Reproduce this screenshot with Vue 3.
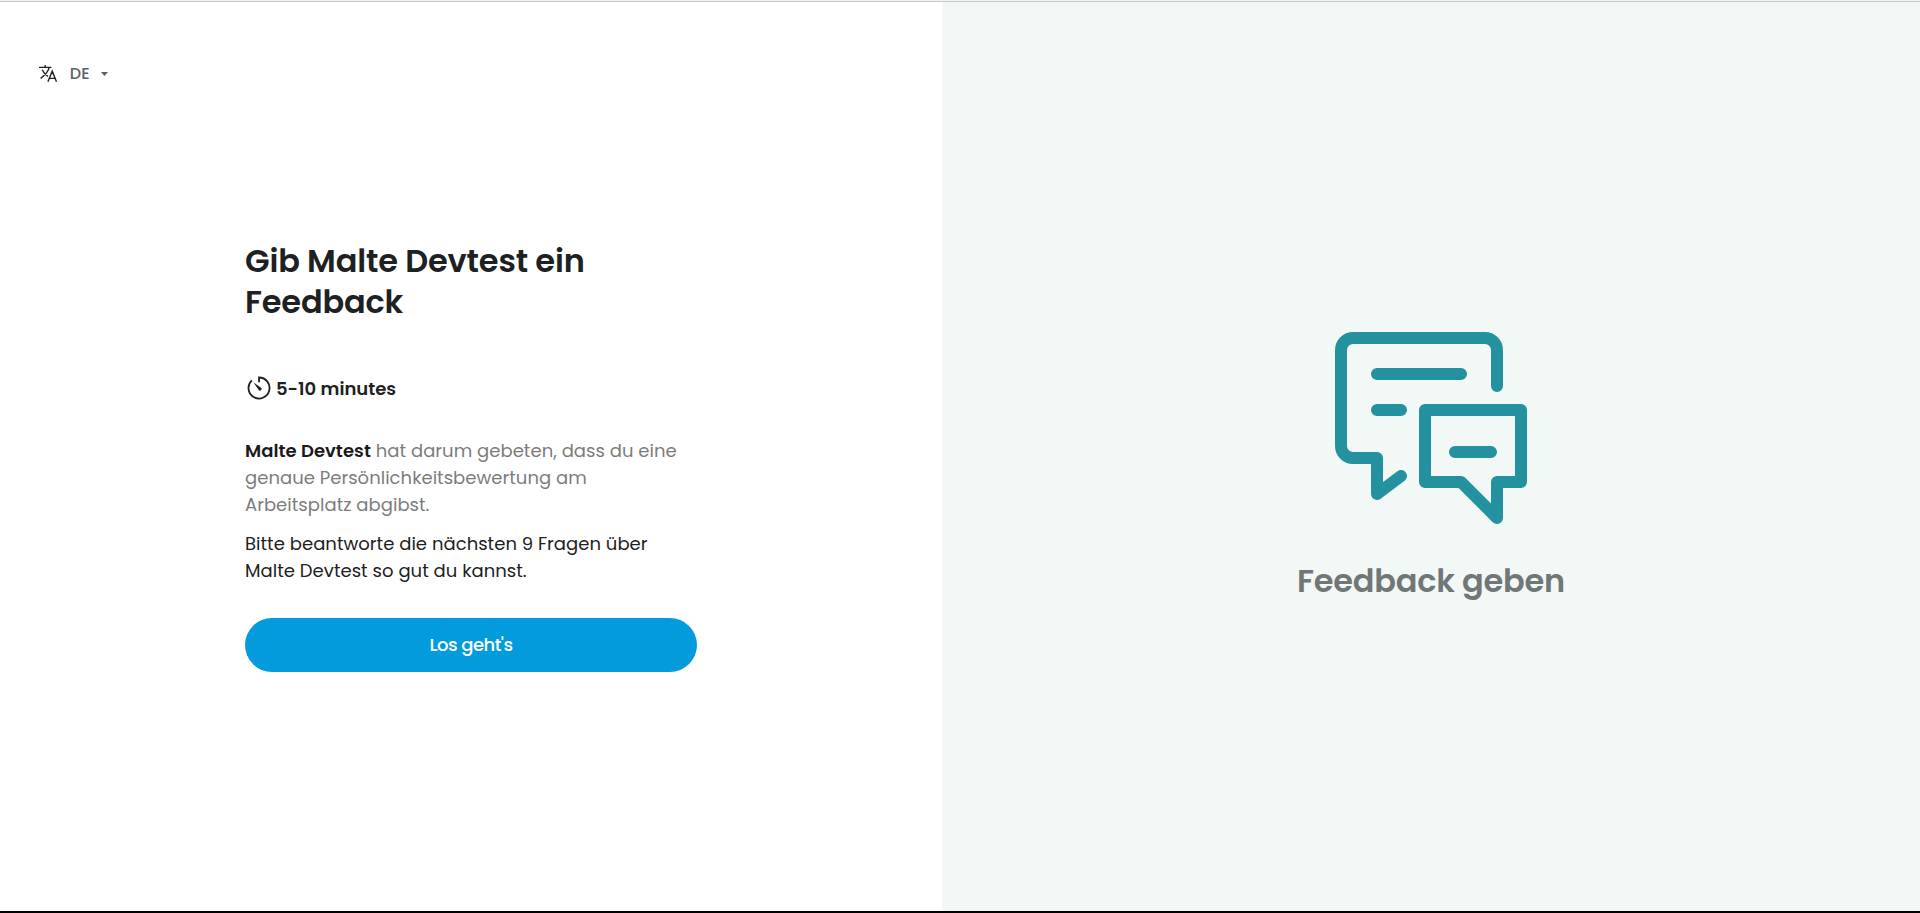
<script setup>
const intro = [
  'genaue Persönlichkeitsbewertung am',
  'Arbeitsplatz abgibst.',
]
const ask = [
  'Bitte beantworte die nächsten 9 Fragen über',
  'Malte Devtest so gut du kannst.',
]
</script>

<template>
  <div class="page">
    <main class="left">
      <div class="lang">
        <svg class="translate" viewBox="0 0 18 17"><path d="M0 2.4H12.4M6.2 0V2.4M10.2 2.4C9.4 6.2 6.4 10 1.6 13.3M3.1 4.8C4.3 7.4 6.4 9.6 9 11.3M8.9 16.7L13.2 6.2L17.5 16.7M10.3 13.4H16.1" /></svg>
        <span class="code">DE</span>
        <svg class="caret" viewBox="0 0 7 4"><path d="M0 0H7L3.5 4Z" /></svg>
      </div>
      <section class="content">
        <h1>Gib Malte Devtest ein<br>Feedback</h1>
        <div class="time">
          <svg class="timer" viewBox="0 0 24 24"><path class="ring" d="M12 6.2V1.5A10.5 10.5 0 1 1 4.9 4.3" /><path class="hand" d="M6.2 6.2L13.7 11.6A1.55 1.55 0 1 1 11.6 13.7Z" /></svg>
          <span class="minutes">5-10 minutes</span>
        </div>
        <p class="intro">
          <span class="line"><strong>Malte Devtest</strong> hat darum gebeten, dass du eine</span>
          <span v-for="l in intro" :key="l" class="line">{{ l }}</span>
        </p>
        <p class="ask">
          <span v-for="l in ask" :key="l" class="line">{{ l }}</span>
        </p>
        <button type="button">Los geht's</button>
      </section>
    </main>
    <aside class="right">
      <svg class="chat" viewBox="0 0 192 192"><path d="M162 54V18A12 12 0 0 0 150 6H18A12 12 0 0 0 6 18V114A12 12 0 0 0 18 126H42V162L66 144M42 42H126M42 78H66M90 78H186V150H162V186L126 150H90ZM120 120H156" /></svg>
      <h2>Feedback geben</h2>
    </aside>
  </div>
</template>

<style>
body { margin: 0; background: #fff; }
</style>

<style scoped>
.page {
  box-sizing: border-box;
  display: flex;
  width: 1920px;
  height: 913px;
  border-bottom: 2px solid #000;
  background: linear-gradient(#f3f3f3 1px, #c6c8c8 1px, #c6c8c8 2px, #fff 2px);
  padding-top: 2px;
  overflow: hidden;
  font-family: Poppins, Inter, sans-serif;
  color: #1d2122;
}
.left { width: 942px; }
.lang { display: flex; align-items: center; height: 24px; padding: 60px 0 0 39px; }
.translate { width: 18px; height: 17px; margin: -2px 0 0 0.4px; fill: none; stroke: #1d2122; stroke-width: 1.4; overflow: visible; }
.code { width: 20px; margin-left: 12.4px; font-size: 16px; line-height: 24px; font-weight: 500; color: #5d6062; }
.caret { width: 7px; height: 4px; margin-left: 11.4px; fill: #5d6062; }
.content { width: 452px; margin: 154px 0 0 245px; }
h1 { margin: 0; font-size: 32px; line-height: 41px; font-weight: 600; letter-spacing: -0.17px; }
.time { display: flex; align-items: center; height: 28px; margin-top: 53px; }
.timer { width: 24px; height: 24px; margin: -2px 0 0 2px; }
.ring { fill: none; stroke: #1d2122; stroke-width: 1.8; }
.hand { fill: #1d2122; }
.minutes { margin-left: 5px; font-size: 18px; line-height: 28px; font-weight: 600; }
p { margin: 0; font-size: 18px; line-height: 27px; letter-spacing: 0.035px; white-space: nowrap; }
.line { display: block; }
.intro { margin-top: 34px; color: #7c7c7c; }
strong { font-weight: 600; color: #1a1a1a; }
.ask { margin-top: 12px; }
button {
  display: block;
  width: 452px;
  height: 54px;
  margin-top: 34px;
  padding: 0;
  border: 0;
  border-radius: 27px;
  background: #049bdc;
  color: #fff;
  font: 500 18px/54px Poppins, Inter, sans-serif;
  letter-spacing: -0.5px;
}
.right {
  display: flex;
  flex: 1;
  flex-direction: column;
  align-items: center;
  padding-top: 330px;
  background: #f2f8f6;
}
.chat { width: 192px; height: 192px; fill: none; stroke: #23919e; stroke-width: 12; stroke-linecap: round; stroke-linejoin: round; }
h2 { margin: 36px 0 0; font-size: 32px; line-height: 42px; font-weight: 600; letter-spacing: -0.22px; color: #717776; }
</style>
